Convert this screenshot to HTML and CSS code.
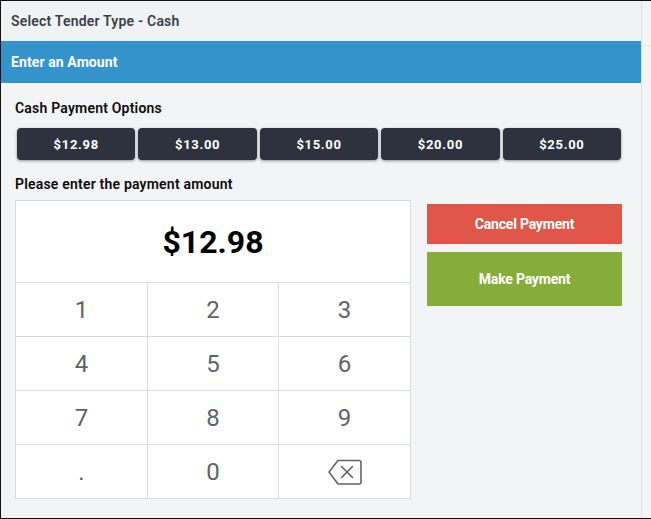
FILE: index.html
```html
<!DOCTYPE html>
<html lang="en">
<head>
<meta charset="utf-8">
<title>Select Tender Type - Cash</title>
<link rel="stylesheet" href="styles.css">
</head>
<body>
<div class="frame">
  <main class="panel">
    <header class="title">Select Tender Type - Cash</header>
    <div class="banner">Enter an Amount</div>
    <section class="content">
      <h2 class="label options-label">Cash Payment Options</h2>
      <div class="options">
        <button class="option">$12.98</button>
        <button class="option">$13.00</button>
        <button class="option">$15.00</button>
        <button class="option">$20.00</button>
        <button class="option">$25.00</button>
      </div>
      <h2 class="label amount-label">Please enter the payment amount</h2>
      <div class="pay-row">
        <div class="keypad">
          <div class="display">$12.98</div>
          <div class="keys">
            <div class="key">1</div><div class="key">2</div><div class="key">3</div>
            <div class="key">4</div><div class="key">5</div><div class="key">6</div>
            <div class="key">7</div><div class="key">8</div><div class="key">9</div>
            <div class="key">.</div><div class="key">0</div>
            <div class="key">
              <svg class="backspace" width="36" height="28" viewBox="0 0 36 28" fill="none" stroke="#5f6368" stroke-width="1.6" stroke-linejoin="round" stroke-linecap="round">
                <path d="M11 2.500H32a2 2 0 0 1 2 2V24a2 2 0 0 1-2 2H11L2 14Z"/>
                <path d="M14.500 8.500L25.500 19.500M25.500 8.500L14.500 19.500"/>
              </svg>
            </div>
          </div>
        </div>
        <div class="actions">
          <button class="action cancel">Cancel Payment</button>
          <button class="action make">Make Payment</button>
        </div>
      </div>
    </section>
  </main>
  <aside class="rail"><div class="rail-head"></div></aside>
</div>
</body>
</html>
```

FILE: styles.css
```css
* { box-sizing: border-box; }
html, body { margin: 0; height: 100%; }
body { font-family: Roboto, "Liberation Sans", sans-serif; background: #f3f4f6; }
.frame {
  width: 651px; height: 519px; display: flex;
  border-top: 1px solid #111; border-left: 1px solid #111; border-bottom: 1px solid #111;
  background: #f3f4f6;
}
.panel { width: 641px; border-right: 1px solid #dcdfe3; }
.rail { flex: 1; }
.rail-head { height: 45px; border-bottom: 1px solid #e2e4e8; }
.title {
  height: 40px; padding: 0 10px; display: flex; align-items: center;
  font-size: 14px; font-weight: 600; letter-spacing: .2px; color: #3a3f4b; background: #f1f2f4;
}
.banner {
  height: 42px; padding: 0 10px; display: flex; align-items: center;
  font-size: 14px; font-weight: 700; letter-spacing: .1px; color: #fff; background: #3493cb;
}
.content { padding: 0 14px; }
.label { margin: 0; font-size: 14px; font-weight: 600; letter-spacing: .2px; color: #0b0b0b; line-height: 18px; }
.options-label { padding-top: 16px; }
.options { display: flex; gap: 3px; margin: 11px 6px 0 2px; }
.option {
  flex: 1; height: 32px; border: 0; border-radius: 4px; padding: 0;
  background: #2d323e; color: #fff; font: 700 13px Roboto, sans-serif; letter-spacing: .7px;
  box-shadow: 0 1px 3px rgba(0,0,0,.4);
}
.amount-label { padding-top: 15px; }
.pay-row { display: flex; margin-top: 7px; align-items: flex-start; }
.keypad { width: 396px; height: 299px; background: #fff; border: 1px solid #d9dce0; }
.display {
  height: 82px; display: flex; align-items: center; justify-content: center;
  font-size: 32px; font-weight: 700; color: #000; border-bottom: 1px solid #d9dce0;
}
.keys { display: grid; grid-template-columns: 131px 131px 132px; grid-template-rows: 54px 54px 54px 53px; }
.key {
  display: flex; align-items: center; justify-content: center;
  font-size: 24px; color: #5f6368; border-left: 1px solid #d9dce0; border-bottom: 1px solid #d9dce0;
}
.key:nth-child(3n+1) { border-left: 0; }
.key:nth-last-child(-n+3) { border-bottom: 0; }
.backspace { display: block; }
.actions { display: flex; flex-direction: column; gap: 8px; width: 195px; margin: 4px 0 0 16px; }
.action { border: 0; padding: 0; color: #fff; font: 700 14px Roboto, sans-serif; letter-spacing: -.2px; }
.cancel { height: 40px; background: #e05749; }
.make { height: 54px; background: #86ad39; }
```
